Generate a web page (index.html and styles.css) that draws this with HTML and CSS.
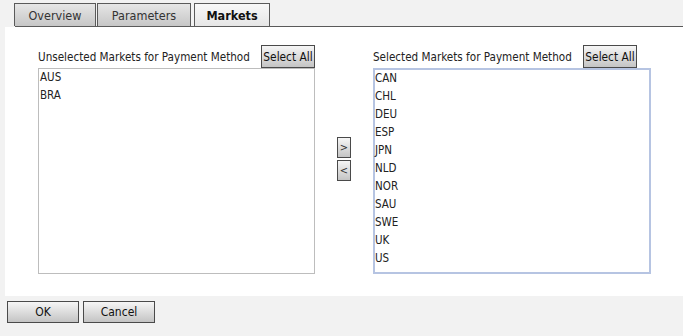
FILE: index.html
```html
<!DOCTYPE html>
<html>
<head>
<meta charset="utf-8">
<link rel="stylesheet" href="styles.css">
</head>
<body>
<div class="tabbar">
  <div class="tab t1">Overview</div>
  <div class="tab t2">Parameters</div>
  <div class="tab t3 active">Markets</div>
</div>
<div class="panel">
  <div class="col left">
    <div class="head">
      <span class="label">Unselected Markets for Payment Method</span>
      <button class="btn sel">Select All</button>
    </div>
    <div class="list gray">
      <div class="item">AUS</div>
      <div class="item">BRA</div>
    </div>
  </div>
  <div class="mid">
    <button class="btn arrow">&gt;</button>
    <button class="btn arrow">&lt;</button>
  </div>
  <div class="col right">
    <div class="head">
      <span class="label">Selected Markets for Payment Method</span>
      <button class="btn sel">Select All</button>
    </div>
    <div class="list blue">
      <div class="item">CAN</div>
      <div class="item">CHL</div>
      <div class="item">DEU</div>
      <div class="item">ESP</div>
      <div class="item">JPN</div>
      <div class="item">NLD</div>
      <div class="item">NOR</div>
      <div class="item">SAU</div>
      <div class="item">SWE</div>
      <div class="item">UK</div>
      <div class="item">US</div>
    </div>
  </div>
</div>
<div class="footer">
  <button class="btn foot">OK</button>
  <button class="btn foot">Cancel</button>
</div>
</body>
</html>
```
FILE: styles.css
```css
html, body {
  margin: 0;
  padding: 0;
}
body {
  background: #f2f2f2;
  font-family: "DejaVu Sans Condensed", "DejaVu Sans", sans-serif;
  font-stretch: condensed;
  color: #222;
  width: 683px;
  height: 336px;
  overflow: hidden;
}
.tabbar {
  margin-left: 15px;
  padding-top: 3px;
  height: 23px;
  border-bottom: 1px solid #5a5a5a;
  display: flex;
  align-items: flex-end;
}
.tab {
  box-sizing: border-box;
  height: 23px;
  border: 1px solid #5a5a5a;
  border-bottom: none;
  background: linear-gradient(#e6e6e6, #c6c6c6);
  font-size: 12.5px;
  color: #333;
  display: flex;
  align-items: center;
  justify-content: center;
  padding-top: 1px;
}
.t1 { width: 82px; margin-left: -1px; }
.t2 { width: 94px; margin-left: 1px; }
.t3 { width: 76px; margin-left: 3px; }
.tab.active {
  background: linear-gradient(#f8f8f8, #e6e6e6);
  font-weight: bold;
  color: #111;
}
.panel {
  margin-left: 5px;
  height: 269px;
  background: #fff;
  box-sizing: border-box;
  padding: 18px 0 0 33px;
  display: flex;
  align-items: flex-start;
}
.col { display: flex; flex-direction: column; }
.left { width: 277px; }
.right { width: 278px; }
.head {
  height: 23px;
  display: flex;
  align-items: center;
  justify-content: space-between;
}
.right .head .sel { margin-right: 14px; }
.label {
  font-size: 11.6px;
  color: #222;
  padding-top: 1px;
}
.btn {
  box-sizing: border-box;
  font-family: inherit;
  font-stretch: condensed;
  border: 1px solid #4a4a4a;
  background: linear-gradient(#f6f6f6, #c4c4c4);
  color: #111;
  padding: 0;
  margin: 0;
  display: flex;
  align-items: center;
  justify-content: center;
}
.sel {
  width: 54px;
  height: 23px;
  font-size: 11.8px;
}
.list {
  box-sizing: border-box;
  height: 206px;
  background: #fff;
  padding: 0 1px;
}
.list.gray { border: 1px solid #bdbdbd; }
.list.blue { border: 2px solid #b6c4e2; padding: 0; }
.item {
  height: 18px;
  line-height: 16px;
  font-size: 11.5px;
  color: #222;
}
.mid {
  width: 58px;
  display: flex;
  flex-direction: column;
  align-items: center;
  gap: 2px;
  padding-top: 92px;
}
.arrow {
  width: 14px;
  height: 21px;
  font-size: 11px;
  color: #333;
}
.footer {
  display: flex;
  gap: 4px;
  padding: 5px 0 0 7px;
}
.foot {
  width: 72px;
  height: 22px;
  font-size: 12px;
}
```
